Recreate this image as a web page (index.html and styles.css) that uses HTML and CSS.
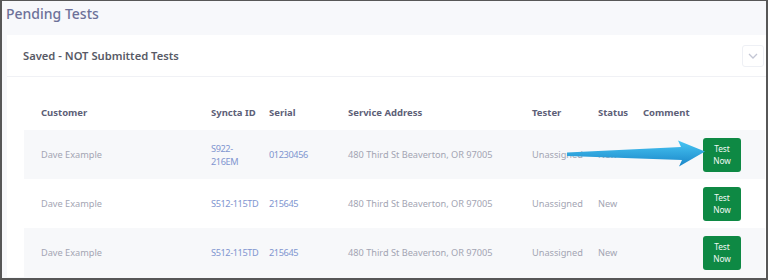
FILE: index.html
```html
<!DOCTYPE html>
<html lang="en">

<head>
    <meta charset="UTF-8" />
    <meta name="viewport" content="width=device-width, initial-scale=1.0" />
    <title>Pending Tests</title>
    <link rel="stylesheet" href="styles.css">
</head>

<body>
    <div class="frame">
        <h1 class="page-title">Pending Tests</h1>

        <section class="card">
            <div class="card-head">
                <h2>Saved - NOT Submitted Tests</h2>
                <button class="toggle" aria-label="Collapse">
                    <svg width="10" height="6" viewBox="0 0 10 6">
                        <path d="M1 1 L5 5 L9 1" fill="none" stroke="#c3c6d4" stroke-width="1.3" />
                    </svg>
                </button>
            </div>

            <div class="card-body">
                <table class="tests">
                    <thead>
                        <tr>
                            <th class="c-customer">Customer</th>
                            <th class="c-id">Syncta ID</th>
                            <th class="c-serial">Serial</th>
                            <th class="c-address">Service Address</th>
                            <th class="c-tester">Tester</th>
                            <th class="c-status">Status</th>
                            <th class="c-comment">Comment</th>
                            <th class="c-action"></th>
                        </tr>
                    </thead>
                    <tbody>
                        <tr>
                            <td>Dave Example</td>
                            <td class="link">S922-<br>216EM</td>
                            <td class="link">01230456</td>
                            <td>480 Third St Beaverton, OR 97005</td>
                            <td>Unassigned</td>
                            <td>New</td>
                            <td></td>
                            <td><button class="btn-test">Test<br>Now</button></td>
                        </tr>
                        <tr>
                            <td>Dave Example</td>
                            <td class="link">S512-115TD</td>
                            <td class="link">215645</td>
                            <td>480 Third St Beaverton, OR 97005</td>
                            <td>Unassigned</td>
                            <td>New</td>
                            <td></td>
                            <td><button class="btn-test">Test<br>Now</button></td>
                        </tr>
                        <tr>
                            <td>Dave Example</td>
                            <td class="link">S512-115TD</td>
                            <td class="link">215645</td>
                            <td>480 Third St Beaverton, OR 97005</td>
                            <td>Unassigned</td>
                            <td>New</td>
                            <td></td>
                            <td><button class="btn-test">Test<br>Now</button></td>
                        </tr>
                    </tbody>
                </table>
            </div>
        </section>

        <!-- callout arrow drawn over the first row -->
        <svg class="callout" width="150" height="30" viewBox="0 0 150 30">
            <defs>
                <linearGradient id="arrowFill" x1="0" y1="0" x2="0" y2="1">
                    <stop offset="0" stop-color="#48c6f4" />
                    <stop offset="1" stop-color="#1a86c8" />
                </linearGradient>
            </defs>
            <path d="M2 12.5 L116 7 L113 0.5 L140 11.5 L114 26.5 L117 20 L2 16 Z" fill="url(#arrowFill)" />
        </svg>
    </div>
</body>

</html>
```

FILE: styles.css
```css
* {
    box-sizing: border-box;
}

body {
    margin: 0;
    font-family: "Noto Sans", sans-serif;
    background: #fff;
}

.frame {
    position: relative;
    width: 768px;
    height: 280px;
    background: #f7f8fb;
    border: 2px solid #575757;
    border-top-width: 1px;
    overflow: hidden;
}

.page-title {
    margin: 0;
    height: 34px;
    padding: 3px 0 0 4px;
    font-size: 14px;
    font-weight: 500;
    color: #6d7199;
}

.card {
    margin: 0 0 0 5px;
    background: #fff;
}

.card-head {
    display: flex;
    justify-content: space-between;
    align-items: center;
    height: 42px;
    padding: 0 2px 0 16px;
    border-bottom: 1px solid #f0f1f5;
}

.card-head h2 {
    margin: 0;
    font-size: 11.2px;
    font-weight: 600;
    color: #585a66;
}

.toggle {
    width: 22px;
    height: 22px;
    padding: 0;
    display: flex;
    align-items: center;
    justify-content: center;
    background: #fff;
    border: 1px solid #eef0f5;
    border-radius: 3px;
}

.card-body {
    padding: 18px 1px 0 17px;
}

.tests {
    width: 100%;
    border-collapse: collapse;
    table-layout: fixed;
    font-size: 9.2px;
}

.tests th,
.tests td {
    padding: 0 0 0 17px;
    text-align: left;
    vertical-align: middle;
}

.tests th {
    height: 35px;
    font-size: 9.5px;
    font-weight: 700;
    color: #5d6077;
    white-space: nowrap;
}

.tests td {
    height: 49px;
    color: #a3a5b3;
    line-height: 13px;
    white-space: nowrap;
}

.tests tbody tr:nth-child(odd) {
    background: #f7f8fa;
}

.tests td.link {
    color: #8196d0;
    letter-spacing: -0.4px;
}

.c-customer { width: 170px; }
.c-id { width: 58px; }
.c-serial { width: 79px; }
.c-address { width: 184px; }
.c-tester { width: 66px; }
.c-status { width: 45px; }
.c-comment { width: 60px; }

.btn-test {
    display: block;
    width: 38px;
    height: 34px;
    padding: 0;
    border: none;
    border-radius: 3px;
    background: #0e8944;
    color: #f2f8f4;
    font-family: inherit;
    font-size: 8.3px;
    line-height: 12px;
}

.callout {
    position: absolute;
    left: 563px;
    top: 139px;
}
```
